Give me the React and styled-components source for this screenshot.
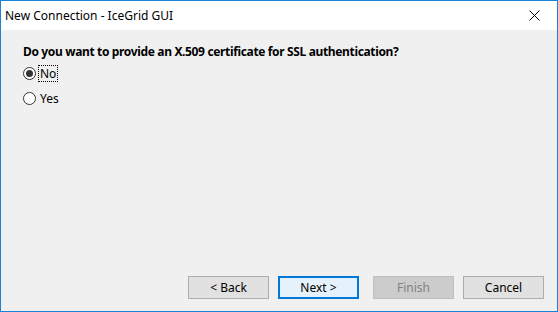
import styled, { createGlobalStyle } from 'styled-components';

const accent = '#1883d7';
const face = '#f0f0f0';
const uiFont = "'Noto Sans', 'Open Sans', sans-serif";

const Global = createGlobalStyle`
	html, body {
		margin: 0;
		padding: 0;
		background: ${face};
	}
`;

const Window = styled.div`
	display: flex;
	flex-direction: column;
	width: 558px;
	height: 312px;
	box-sizing: border-box;
	border: 1px solid ${accent};
	background: ${face};
	font-family: ${uiFont};
	font-size: 12px;
	color: #000;
`;

const TitleBar = styled.div`
	display: flex;
	align-items: center;
	justify-content: space-between;
	height: 29px;
	background: #fff;
	padding-left: 4px;
	flex-shrink: 0;
`;

const TitleText = styled.span`
	font-size: 12px;
	line-height: 16px;
`;

const CloseBox = styled.div`
	display: flex;
	align-items: center;
	justify-content: center;
	width: 46px;
	height: 29px;
`;

const Content = styled.div`
	flex: 1;
	display: flex;
	flex-direction: column;
	padding: 14px 23px 0 22px;
`;

const Question = styled.div`
	font-weight: bold;
	font-size: 12px;
	line-height: 16px;
	letter-spacing: -0.35px;
	margin-bottom: 5px;
`;

const Option = styled.label`
	display: flex;
	align-items: center;
	gap: 3px;
	height: 16px;
	margin-bottom: 9px;
`;

const Circle = styled.span`
	position: relative;
	width: 11px;
	height: 11px;
	border: 1px solid #333;
	border-radius: 50%;
	background: #fff;
	flex-shrink: 0;
	&::after {
		content: '';
		display: ${(p) => (p.$checked ? 'block' : 'none')};
		position: absolute;
		left: 2px;
		top: 2px;
		width: 7px;
		height: 7px;
		border-radius: 50%;
		background: #333;
	}
`;

const OptionText = styled.span`
	line-height: 15px;
	padding: 0 1px;
	outline: ${(p) => (p.$focused ? '1px dotted #000' : 'none')};
`;

const Footer = styled.div`
	display: flex;
	justify-content: flex-end;
	padding: 0 13px 12px 0;
	margin-top: auto;
`;

const Button = styled.div`
	display: flex;
	align-items: center;
	justify-content: center;
	box-sizing: border-box;
	width: 81px;
	height: 23px;
	margin-left: ${(p) => p.$gap}px;
	background: ${(p) => (p.$default ? '#e5f1fb' : p.$disabled ? '#cccccc' : '#e1e1e1')};
	border: 1px solid ${(p) => (p.$default ? '#0078d7' : p.$disabled ? '#bfbfbf' : '#adadad')};
	box-shadow: ${(p) => (p.$default ? 'inset 0 0 0 1px #0078d7' : 'none')};
	color: ${(p) => (p.$disabled ? '#838383' : '#000')};
	font-size: 12px;
`;

export default function App() {
	return (
		<Window>
			<Global />
			<TitleBar>
				<TitleText>New Connection - IceGrid GUI</TitleText>
				<CloseBox>
					<svg width="11" height="11" viewBox="0 0 11 11">
						<path d="M0.5 0.5 L10.5 10.5 M10.5 0.5 L0.5 10.5" stroke="#000" strokeWidth="1" />
					</svg>
				</CloseBox>
			</TitleBar>
			<Content>
				<Question>Do you want to provide an X.509 certificate for SSL authentication?</Question>
				<Option>
					<Circle $checked />
					<OptionText $focused>No</OptionText>
				</Option>
				<Option>
					<Circle />
					<OptionText>Yes</OptionText>
				</Option>
			</Content>
			<Footer>
				<Button $gap={0}>&lt; Back</Button>
				<Button $gap={9} $default>Next &gt;</Button>
				<Button $gap={14} $disabled>Finish</Button>
				<Button $gap={9}>Cancel</Button>
			</Footer>
		</Window>
	);
}
